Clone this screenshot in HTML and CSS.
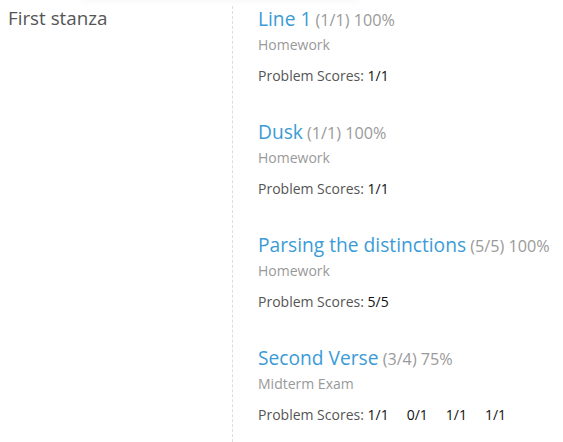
FILE: index.html
```html
<!DOCTYPE html>
<html>
<head>
<meta charset="utf-8">
<link rel="stylesheet" href="styles.css">
</head>
<body>
<div class="topshade"></div>
<div class="chapter">
  <div class="chapter-title">First stanza</div>
  <div class="sections">
    <div class="section">
      <div class="section-head"><a class="section-name">Line 1</a> <span class="section-score">(1/1) 100%</span></div>
      <div class="section-type">Homework</div>
      <div class="scores"><span class="label">Problem Scores:</span> <span class="score">1/1</span></div>
    </div>
    <div class="section">
      <div class="section-head"><a class="section-name">Dusk</a> <span class="section-score">(1/1) 100%</span></div>
      <div class="section-type">Homework</div>
      <div class="scores"><span class="label">Problem Scores:</span> <span class="score">1/1</span></div>
    </div>
    <div class="section">
      <div class="section-head"><a class="section-name">Parsing the distinctions</a> <span class="section-score">(5/5) 100%</span></div>
      <div class="section-type">Homework</div>
      <div class="scores"><span class="label">Problem Scores:</span> <span class="score">5/5</span></div>
    </div>
    <div class="section">
      <div class="section-head"><a class="section-name">Second Verse</a> <span class="section-score">(3/4) 75%</span></div>
      <div class="section-type">Midterm Exam</div>
      <div class="scores"><span class="label">Problem Scores:</span> <span class="score">1/1</span><span class="score">0/1</span><span class="score">1/1</span><span class="score">1/1</span></div>
    </div>
  </div>
</div>
</body>
</html>
```
FILE: styles.css
```css
html, body {
  margin: 0;
  padding: 0;
  background: #fff;
  font-family: "Open Sans", sans-serif;
}
.topshade {
  position: absolute;
  top: -6px;
  left: 80px;
  width: 280px;
  height: 6px;
  box-shadow: 0 0 8px rgba(0,0,0,0.05);
}
.chapter {
  display: flex;
  padding-top: 6px;
}
.chapter-title {
  width: 224px;
  padding-left: 8px;
  font-size: 18.8px;
  line-height: 24px;
  color: #555;
}
.sections {
  border-left: 1px dashed #ddd;
  padding-left: 25px;
  padding-bottom: 4px;
  flex: 1;
}
.section {
  height: 113px;
}
.section-head {
  line-height: 26px;
}
.section-name {
  font-size: 19.2px;
  color: #3b9bd6;
}
.section-score {
  font-size: 16.2px;
  color: #9a9a9a;
}
.section-type {
  font-size: 14px;
  line-height: 24px;
  color: #999;
}
.scores {
  margin-top: 9px;
  font-size: 14px;
  line-height: 20px;
  color: #555;
}
.score {
  color: #111;
  margin-right: 18px;
}
```
